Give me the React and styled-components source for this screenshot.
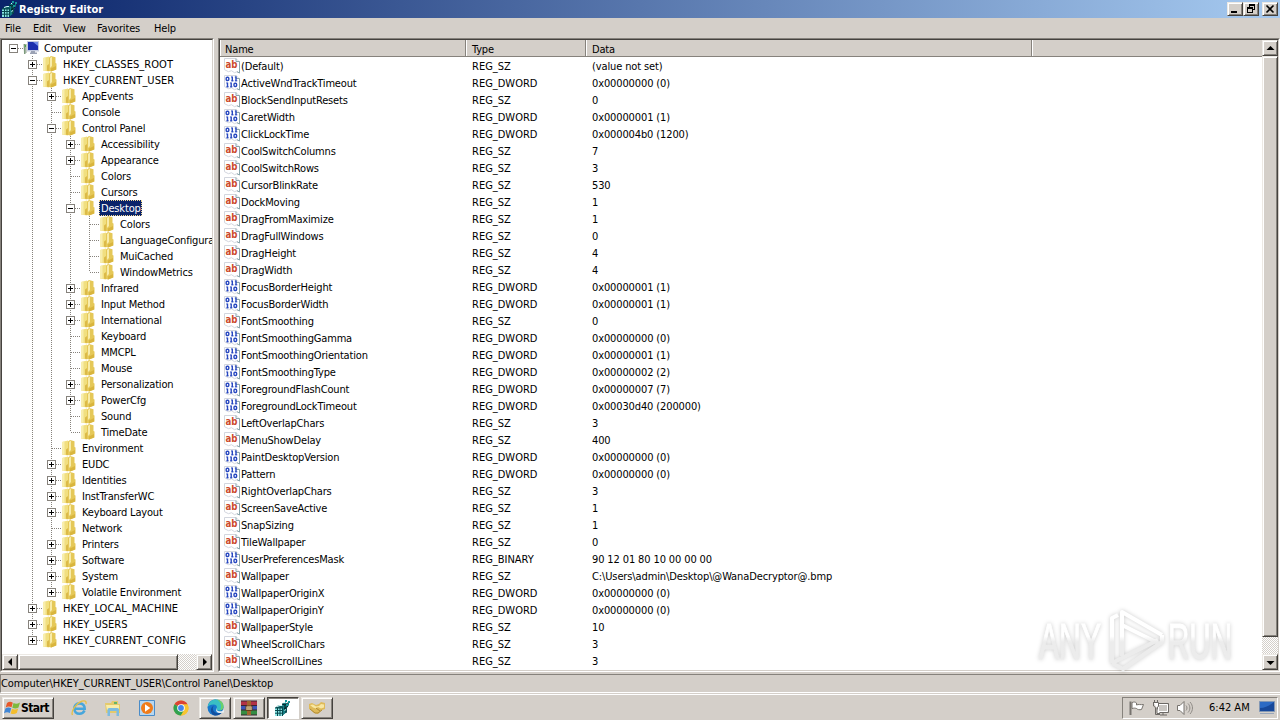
import React from "react";
import styled, { createGlobalStyle, css } from "styled-components";

const GlobalStyle = createGlobalStyle`
    * {
        box-sizing: border-box;
    }
    body {
        margin: 0;
        overflow: hidden;
        background: #d4cfc9;
    }
`
const checker = css`
    background: repeating-conic-gradient(#ffffff 0 25%, #d4cfc9 0 50%) 0 0 / 2px 2px;
`
const raised = css`
    background: #d4cfc9;
    border: 1px solid;
    border-color: #ece9e4 #45423e #45423e #ece9e4;
    box-shadow: inset 1px 1px 0 #ffffff, inset -1px -1px 0 #86827c;
`
const Screen = styled.div`
    width: 1280px;
    height: 720px;
    display: flex;
    flex-direction: column;
    background: #d4cfc9;
    color: #000000;
    font-family: "DejaVu Sans Condensed", "DejaVu Sans", sans-serif;
    font-stretch: condensed;
    font-size: 11px;
    letter-spacing: -0.17px;
    line-height: 16px;
    white-space: nowrap;
    cursor: default;
    overflow: hidden;
`
const TitleBar = styled.div`
    height: 18px;
    flex: none;
    display: flex;
    align-items: center;
    padding: 0 2px 0 2px;
    background: linear-gradient(to right, #0a246a, #a6caf0);
    color: #ffffff;
`
const Title = styled.span`
    flex: 1;
    padding: 1px 0 0 1px;
    font-weight: bold;
    letter-spacing: 0.02px;
`
const CaptionButton = styled.div`
    width: 16px;
    height: 14px;
    margin-left: ${props => props.$gap ? "3px" : "0"};
    display: flex;
    align-items: center;
    justify-content: center;
    ${raised}
`
const MenuBar = styled.div`
    height: 20px;
    flex: none;
    display: flex;
    align-items: center;
    gap: 12px;
    padding: 1px 0 0 5px;
`
const MenuItem = styled.span`
    width: ${props => props.$width}px;
`
const Workspace = styled.div`
    height: 634px;
    flex: none;
    display: flex;
    gap: 4px;
`
const Pane = styled.div`
    border: 1px solid;
    border-color: #86827c #ffffff #ffffff #86827c;
    width: ${props => props.$width}px;
    flex: none;
`
const PaneInner = styled.div`
    height: 100%;
    border: 1px solid;
    border-color: #45423e #d4cfc9 #d4cfc9 #45423e;
    background: #ffffff;
    display: flex;
    flex-direction: ${props => props.$row ? "row" : "column"};
    overflow: hidden;
`
const Tree = styled.div`
    flex: 1;
    overflow: hidden;
    padding-left: 2px;
`
const TreeRow = styled.div`
    height: 16px;
    display: flex;
    align-items: center;
`
const dotsDown = "repeating-linear-gradient(to bottom, #86827c 0 1px, transparent 1px 2px)";
const dotsRight = "repeating-linear-gradient(to right, #86827c 0 1px, transparent 1px 2px)";
const Guide = styled.div`
    width: 19px;
    height: 16px;
    flex: none;
    display: flex;
    align-items: center;
    padding-left: 5px;
    background-repeat: no-repeat;
    background-image: ${props => props.$down ? dotsDown : "none"}, ${props => props.$across ? dotsRight : "none"};
    background-size: 1px ${props => props.$half ? "8px" : "16px"}, 10px 1px;
    background-position: 9px 0, 10px 8px;
`
const Expander = styled.div`
    width: 9px;
    height: 9px;
    border: 1px solid #86827c;
    background:
        linear-gradient(#000000, #000000) 1px 3px / 5px 1px no-repeat,
        ${props => props.$open ? "" : "linear-gradient(#000000, #000000) 3px 1px / 1px 5px no-repeat,"}
        #ffffff;
`
const TreeIcon = styled.svg`
    width: 16px;
    height: 16px;
    flex: none;
`
const TreeLabel = styled.span`
    height: 16px;
    margin-left: 3px;
    padding: 1px 0 0 1px;
    border: 1px solid transparent;
    line-height: 14px;
    letter-spacing: ${props => props.$root ? "0.05px" : "-0.17px"};
    ${props => props.$selected && css`
        background: #0a246a;
        color: #ffffff;
        border: 1px dotted #f5db95;
    `}
`
const HScroll = styled.div`
    height: 16px;
    flex: none;
    display: flex;
    ${checker}
`
const VScroll = styled.div`
    width: 16px;
    flex: none;
    display: flex;
    flex-direction: column;
    ${checker}
`
const ScrollButton = styled.div`
    width: 16px;
    height: 16px;
    flex: none;
    display: flex;
    align-items: center;
    justify-content: center;
    ${raised}
`
const HThumb = styled.div`
    width: 160px;
    ${raised}
`
const VThumb = styled.div`
    height: 581px;
    ${raised}
`
const ScrollSpace = styled.div`
    flex: 1;
`
const List = styled.div`
    flex: 1;
    overflow: hidden;
`
const ListHeader = styled.div`
    height: 17px;
    display: flex;
    margin-bottom: 1px;
`
const HeaderCell = styled.div`
    width: ${props => props.$width ? props.$width + "px" : "auto"};
    flex: ${props => props.$width ? "none" : 1};
    padding: 1px 0 0 ${props => props.$first ? "5px" : "6px"};
    line-height: 17px;
    letter-spacing: -0.17px;
    background: #d4cfc9;
    border-bottom: 1px solid #86827c;
    border-right: ${props => props.$width ? "1px solid #86827c" : "none"};
    box-shadow: inset 1px 0 0 #ffffff;
`
const ListRow = styled.div`
    height: 17px;
    display: grid;
    grid-template-columns: 252px 120px 1fr;
    align-items: center;
    line-height: 17px;
`
const NameCell = styled.div`
    height: 17px;
    display: flex;
    gap: 1px;
    padding-left: 4px;
`
const TypeCell = styled.span`
    letter-spacing: 0;
`
const DataCell = styled.span`
    letter-spacing: -0.12px;
`
const StatusBar = styled.div`
    height: 19px;
    flex: none;
    margin-top: 2px;
    line-height: 17px;
    letter-spacing: -0.08px;
    border-top: 1px solid #86827c;
    border-left: 1px solid #86827c;
    border-bottom: 1px solid #ffffff;
`
const TaskBar = styled.div`
    flex: 1;
    display: flex;
    align-items: center;
    border-top: 1px solid #ffffff;
    margin-top: 1px;
    padding: 0 2px;
`
const StartButton = styled.div`
    width: 52px;
    height: 22px;
    display: flex;
    align-items: center;
    padding-left: 1px;
    ${raised}
`
const StartText = styled.span`
    font-weight: bold;
    font-size: 12px;
    letter-spacing: -0.6px;
`
const QuickLaunch = styled.div`
    display: flex;
    gap: 18px;
    padding: 0 10px 0 17px;
    svg {
        display: block;
    }
`
const TaskButtons = styled.div`
    display: flex;
    gap: 2px;
    flex: 1;
`
const TaskButton = styled.div`
    width: 32px;
    height: 22px;
    display: flex;
    align-items: center;
    justify-content: center;
    ${raised}
    ${props => props.$active && css`
        background: #ffffff;
        border-color: #45423e #ffffff #ffffff #45423e;
        box-shadow: inset 1px 1px 0 #86827c;
    `}
`
const Tray = styled.div`
    width: 156px;
    height: 22px;
    display: flex;
    align-items: center;
    gap: 6px;
    border: 1px solid;
    border-color: #86827c #ffffff #ffffff #86827c;
    padding-left: 5px;
`
const Clock = styled.span`
    width: 44px;
    margin-left: 9px;
    letter-spacing: 0;
`
const Watermark = styled.svg`
    position: absolute;
    left: 1030px;
    top: 600px;
    filter: drop-shadow(0 0 2px rgba(0, 0, 0, 0.2));
`

const FolderIcon = () => (
    <TreeIcon viewBox="0 0 16 16">
        <path d="M1 2 7 .5v15L1 14.500z" fill="#f1df80" />
        <path d="M1 2 3.500 1.500V14.500L1 14.200z" fill="#f8eeae" />
        <path d="M7 1.500 9 0l4.500 1.200V7l1 .5v6L9 15.500l-2-.5z" fill="#e5c858" />
        <path d="M8 2 10 .5v9.500l-2 2z" fill="#f8ecab" />
        <path d="M9 12.500 14 10v3.400L9 15.500z" fill="#d9b53e" />
        <path d="M5 9.500 7 8v7l-2-.2z" fill="#dcba48" />
    </TreeIcon>
)
const ComputerIcon = () => (
    <TreeIcon viewBox="0 0 16 16">
        <path d="M0 4h4v9H1z" fill="#c6ccc4" />
        <path d="M1 4h1.500v10H1z" fill="#7c9a7c" />
        <path d="M2 5h1v2H2z" fill="#4aa848" />
        <path d="M4 1h12v10.500H4z" fill="#c4cbe0" />
        <path d="M5 2h10v8H5z" fill="#1b2fae" />
        <path d="M10 2h5v4z" fill="#6f8be6" />
        <path d="M8 11h4v1.500h2V14H7v-1.500h1z" fill="#9ba2b4" />
    </TreeIcon>
)
const ValueIcon = ({ type }) => (
    <svg width="16" height="16" viewBox="0 0 16 16">
        <path d="M.5.5h11.5l3.500 3.500v11l-2.500-1.300-2.500 1-3-2-3 1-4-2z" fill="#ffffff" stroke="#d3d6de" />
        <path d="M12 .5v3h3.500v11.500l-2.500-1.300" fill="none" stroke="#8ba6ac" />
        {type === "REG_SZ"
            ? <text x="1.500" y="10" fontFamily="DejaVu Sans" fontWeight="bold" fontSize="10.500" letterSpacing="0" textLength="12" lengthAdjust="spacingAndGlyphs" fill="#cc4a2c">ab</text>
            : <g fill="none" stroke="#2848c0" strokeWidth="1.400">
                <rect x="2.200" y="2.200" width="2.600" height="3.300" rx="1" />
                <path d="M8.300 1.500v4.700M12 1.500v4.700" />
                <path d="M7 2h1M10.800 2h1M7.200 5.800h2.400M10.900 5.800h2.400" strokeWidth="0.900" />
                <path d="M3.500 7.500v4.700M7.200 7.500v4.700" />
                <path d="M2.200 8h1M5.900 8h1M2.300 11.800h2.400M6 11.800h2.400" strokeWidth="0.900" />
                <rect x="10" y="8.200" width="2.600" height="3.300" rx="1" />
            </g>}
    </svg>
)
const RegeditIcon = () => (
    <svg width="16" height="16" viewBox="0 0 16 16">
        <path d="M0 8 3 5.500h7V13l-3 3H0z" fill="#0b5c62" />
        <path d="M0 8h7v8H0z" fill="#8ae6e6" />
        <path d="M0 10.500h7M0 13.200h7M2.500 8v8M5 8v8M7.500 7v9M0 8h7" stroke="#08484d" fill="none" />
        <path d="m7 4 3-2 2 2 2-2v3l-2 3v4l-4 3V8z" fill="#127c80" />
        <path d="m7 4 3 1v4M10 5l4-3M9 9l4-3M11 8v5" stroke="#021f25" fill="none" />
        <path d="m2 6.500 3-1h2M9 3l1-1M9.500 10.500l1.500-1" stroke="#cffafa" fill="none" />
        <path d="M10 0h2v2h-2zM13 1h2v2h-2zM11 4h2v2h-2z" fill="#17969a" />
    </svg>
)
const WindowsFlag = () => (
    <svg width="17" height="16" viewBox="0 0 17 16">
        <path d="M3 3c2-1.500 4-1.400 5.800-.3L7.500 7.300C5.600 6.300 3.700 6.300 1.700 7.500z" fill="#e8582a" />
        <path d="M9.500 3.100c2 1 4 .9 6.500-.5l-1.500 4.800c-2 1.300-4 1.300-6.200.3z" fill="#7eb93c" />
        <path d="M1.400 8.400c2-1.200 3.900-1.200 5.800-.2L5.900 13C4 12 2 12 0 13.200z" fill="#3f86d6" />
        <path d="M8 8.700c2.200 1 4.200.9 6.200-.3l-1.400 4.700c-2 1.300-4.100 1.300-6.200.3z" fill="#f3bd2e" />
    </svg>
)
const IeIcon = () => (
    <svg width="16" height="16" viewBox="0 0 16 16">
        <path d="M13.500 10.500c-1 2.200-2.800 3.300-5 3.300-3.200 0-5.200-2.200-5.200-5.200s2-5.200 5.200-5.200 5.300 2.200 5.200 5.300H4" fill="none" stroke="#46a6dc" strokeWidth="2.600" />
        <path d="M1.500 15C-.5 11.500 5 3.500 11 1.200c3.200-1 4.700.2 3.900 2.800" fill="none" stroke="#e6bf45" strokeWidth="1.300" />
    </svg>
)
const ExplorerIcon = () => (
    <svg width="16" height="16" viewBox="0 0 16 16">
        <path d="M0 3h6l1-2h6v3h2v9H1z" fill="#e4ca6c" />
        <path d="M1 5h13v5H2z" fill="#f8edaa" />
        <path d="M9 2h3v2H9z" fill="#65b567" />
        <path d="M2.500 16V9.500C2.500 8 4 8 5 8h6.500c1 0 2.500 0 2.500 1.500V16h-2.500v-5H5v5z" fill="#7dbce0" />
    </svg>
)
const PlayerIcon = () => (
    <svg width="16" height="16" viewBox="0 0 16 16">
        <path d="M.5.5h15v15H.5z" fill="#b7d7f0" stroke="#4a8cc8" />
        <circle cx="8" cy="8" r="6" fill="#f07c1a" />
        <path d="m6 4.300 5.300 3.700L6 11.700z" fill="#ffffff" />
    </svg>
)
const ChromeIcon = () => (
    <svg width="16" height="16" viewBox="0 0 16 16">
        <circle cx="8" cy="8" r="7.500" fill="#f7c531" />
        <path d="M8 8 1.500 4.250A7.500 7.500 0 0 1 14.500 4.250z" fill="#db4334" />
        <path d="M8 8 1.500 4.250A7.500 7.500 0 0 0 8 15.500l3.200-5.600z" fill="#2fa150" />
        <path d="M8 4.250h6.500A7.500 7.500 0 0 1 8 15.500l3.200-5.600z" fill="#f7c531" />
        <circle cx="8" cy="8" r="3.800" fill="#ffffff" />
        <circle cx="8" cy="8" r="2.900" fill="#4284ec" />
    </svg>
)
const EdgeIcon = () => (
    <svg width="17" height="17" viewBox="0 0 17 17">
        <circle cx="8.500" cy="8.500" r="8" fill="#1877cc" />
        <path d="M.7 8C1.500 3 5 .5 8.700.5c4.300 0 7.800 3 7.800 6.700 0 3-2.200 4.300-4.500 4.300-2 0-2.700-1-2.200-2C10.500 7 9 5.600 6.500 5.600 3.500 5.600 1.500 6.600.7 8z" fill="#39bfc4" />
        <path d="M10 .6c3.800.6 6.500 3.300 6.500 6.600 0 2.500-1.500 3.800-3.300 4.200C15 8 14 3 10 .6z" fill="#6ad06a" />
        <path d="M7 6.500c-2.500 2.500-1 7.500 4 7.800 2 0 3.300-.5 4.500-1.700-1.600 3-5 4.300-8 3.800C3 15 2.500 8.500 7 6.500z" fill="#124f9e" />
        <path d="M9.700 8.800c-.8 2.500.8 4 4.800 3.400l2.500-1.700v3l-3 .6c-4 .2-6-2.300-4.300-5.300z" fill="#e6eef2" />
    </svg>
)
const WinRarIcon = () => (
    <svg width="18" height="16" viewBox="0 0 18 16">
        <path d="M1 1h16v4.500H1z" fill="#b23246" />
        <path d="M1 5.500h16v4.500H1z" fill="#3a55b8" />
        <path d="M1 10h16v5H1z" fill="#358c42" />
        <path d="M1 5.500h16M1 10h16M1 1h16M1 15h16" stroke="#3c2430" />
        <path d="M7 1h4v14H7z" fill="#a0662e" />
        <path d="M6 6h6v4.500H6z" fill="#f2e6c4" stroke="#66401c" />
        <path d="M8 7v3M10 7v3" stroke="#8a6428" />
    </svg>
)
const HandshakeIcon = () => (
    <svg width="18" height="16" viewBox="0 0 18 16">
        <path d="m1 4 3-1 4 2 3-1 2-2 4 1v6l-3 1-4 4-4-1-3-3-2-1z" fill="#dfba58" />
        <path d="m2 5 3-.5 3 2 3-.5 2-2 3 .5v3l-3 1-3-1.500-2 1.500-3-1z" fill="#f8e7a2" />
        <path d="m2 9 5 4h3l4-3M8 8l4 3" stroke="#b08a34" fill="none" />
    </svg>
)
const FlagIcon = () => (
    <svg width="18" height="16" viewBox="0 0 18 16">
        <path d="M2.500 15V1.500" stroke="#77736e" strokeWidth="2" />
        <path d="M4 2.500c2-.8 3.500-.5 4.500.5v2c2-1 4 0 7-.5l-2 5c-2 .5-4 .2-5-1C7 8 6 8 4 8.500z" fill="#ffffff" stroke="#77736e" />
    </svg>
)
const NetworkIcon = () => (
    <svg width="18" height="16" viewBox="0 0 18 16">
        <path d="M5.500 3.500h11v9h-11z" fill="#c9c6c2" stroke="#6c6965" />
        <path d="M6.500 4.500h9v7h-9z" fill="none" stroke="#ffffff" />
        <path d="M8 15h7M11 12.500V15" stroke="#6c6965" />
        <path d="M1.500 2.500h5v4l-1.500 1v6h3" fill="#ffffff" stroke="#6c6965" />
        <path d="M1.500 2v4l2 1.500v7H8M2.500 0v3M5.500 0v3" fill="none" stroke="#6c6965" />
    </svg>
)
const SoundIcon = () => (
    <svg width="18" height="16" viewBox="0 0 18 16">
        <path d="M1.500 5.500h2.500l4-4v13l-4-4H1.500z" fill="#ffffff" stroke="#77736e" />
        <path d="M10 5.500c1.300 1.500 1.300 3.500 0 5M12 3.500c2.500 2.500 2.500 6.500 0 9M14 2c3.300 3.500 3.300 8.500 0 12" fill="none" stroke="#8e8a85" />
    </svg>
)
const DesktopIcon = () => (
    <svg width="16" height="15" viewBox="0 0 16 15">
        <path d="M.5 1.500h15v10H.5z" fill="#2c6ac4" stroke="#8297b4" />
        <path d="M1 8c5 0 9-2 14-6v9H1z" fill="#17489a" />
        <path d="M1 13.500h14" stroke="#98a6ba" />
    </svg>
)
const arrows = {
    left: "M6 0v8L2 4z",
    right: "M3 0v8l4-4z",
    up: "M.5 6h8l-4-4z",
    down: "M.5 3h8l-4 4z"
}
const Arrow = ({ to }) => (
    <svg width="9" height="9" viewBox="0 0 9 9"><path d={arrows[to]} /></svg>
)

// [depth, name, expander]
const keys = [
    [0, "Computer", "-"],
    [1, "HKEY_CLASSES_ROOT", "+"],
    [1, "HKEY_CURRENT_USER", "-"],
    [2, "AppEvents", "+"],
    [2, "Console"],
    [2, "Control Panel", "-"],
    [3, "Accessibility", "+"],
    [3, "Appearance", "+"],
    [3, "Colors"],
    [3, "Cursors"],
    [3, "Desktop", "-"],
    [4, "Colors"],
    [4, "LanguageConfiguration"],
    [4, "MuiCached"],
    [4, "WindowMetrics"],
    [3, "Infrared", "+"],
    [3, "Input Method", "+"],
    [3, "International", "+"],
    [3, "Keyboard"],
    [3, "MMCPL"],
    [3, "Mouse"],
    [3, "Personalization", "+"],
    [3, "PowerCfg", "+"],
    [3, "Sound"],
    [3, "TimeDate"],
    [2, "Environment"],
    [2, "EUDC", "+"],
    [2, "Identities", "+"],
    [2, "InstTransferWC", "+"],
    [2, "Keyboard Layout", "+"],
    [2, "Network"],
    [2, "Printers", "+"],
    [2, "Software", "+"],
    [2, "System", "+"],
    [2, "Volatile Environment", "+"],
    [1, "HKEY_LOCAL_MACHINE", "+"],
    [1, "HKEY_USERS", "+"],
    [1, "HKEY_CURRENT_CONFIG", "+"]
]
const SZ = "REG_SZ"
const DWORD = "REG_DWORD"
const values = [
    ["(Default)", SZ, "(value not set)"],
    ["ActiveWndTrackTimeout", DWORD, "0x00000000 (0)"],
    ["BlockSendInputResets", SZ, "0"],
    ["CaretWidth", DWORD, "0x00000001 (1)"],
    ["ClickLockTime", DWORD, "0x000004b0 (1200)"],
    ["CoolSwitchColumns", SZ, "7"],
    ["CoolSwitchRows", SZ, "3"],
    ["CursorBlinkRate", SZ, "530"],
    ["DockMoving", SZ, "1"],
    ["DragFromMaximize", SZ, "1"],
    ["DragFullWindows", SZ, "0"],
    ["DragHeight", SZ, "4"],
    ["DragWidth", SZ, "4"],
    ["FocusBorderHeight", DWORD, "0x00000001 (1)"],
    ["FocusBorderWidth", DWORD, "0x00000001 (1)"],
    ["FontSmoothing", SZ, "0"],
    ["FontSmoothingGamma", DWORD, "0x00000000 (0)"],
    ["FontSmoothingOrientation", DWORD, "0x00000001 (1)"],
    ["FontSmoothingType", DWORD, "0x00000002 (2)"],
    ["ForegroundFlashCount", DWORD, "0x00000007 (7)"],
    ["ForegroundLockTimeout", DWORD, "0x00030d40 (200000)"],
    ["LeftOverlapChars", SZ, "3"],
    ["MenuShowDelay", SZ, "400"],
    ["PaintDesktopVersion", DWORD, "0x00000000 (0)"],
    ["Pattern", DWORD, "0x00000000 (0)"],
    ["RightOverlapChars", SZ, "3"],
    ["ScreenSaveActive", SZ, "1"],
    ["SnapSizing", SZ, "1"],
    ["TileWallpaper", SZ, "0"],
    ["UserPreferencesMask", "REG_BINARY", "90 12 01 80 10 00 00 00"],
    ["Wallpaper", SZ, "C:\\Users\\admin\\Desktop\\@WanaDecryptor@.bmp"],
    ["WallpaperOriginX", DWORD, "0x00000000 (0)"],
    ["WallpaperOriginY", DWORD, "0x00000000 (0)"],
    ["WallpaperStyle", SZ, "10"],
    ["WheelScrollChars", SZ, "3"],
    ["WheelScrollLines", SZ, "3"]
]

// true when the branch at this level goes on below the row
const continues = (index, level) => {
    for (let i = index + 1; i < keys.length; i++) {
        if (keys[i][0] < level) return false
        if (keys[i][0] === level) return true
    }
    return false
}

const KeyRow = ({ index }) => {
    const [depth, name, expander] = keys[index]
    const parents = []
    for (let level = 0; level < depth; level++) {
        parents.push(<Guide key={level} $down={level > 0 && continues(index, level)} />)
    }
    return (
        <TreeRow>
            {parents}
            <Guide $down={depth > 0} $half={!continues(index, depth)} $across>
                {expander && <Expander $open={expander === "-"} />}
            </Guide>
            {depth === 0 ? <ComputerIcon /> : <FolderIcon />}
            <TreeLabel $root={depth === 1} $selected={name === "Desktop"}>{name}</TreeLabel>
        </TreeRow>
    )
}

export default function App() {
    return (
        <Screen>
            <GlobalStyle />
            <TitleBar>
                <RegeditIcon />
                <Title>Registry Editor</Title>
                <CaptionButton>
                    <svg width="10" height="10"><path d="M1 7h6v2H1z" /></svg>
                </CaptionButton>
                <CaptionButton>
                    <svg width="10" height="10" viewBox="0 0 10 10">
                        <path d="M3 0h6v2H3zM8 2h1v4H7V5h1zM3 2h1v1H3zM1 3h6v2H1zM1 5h1v4H1zM6 5h1v4H6zM2 8h4v1H2z" />
                    </svg>
                </CaptionButton>
                <CaptionButton $gap>
                    <svg width="10" height="10"><path d="m1.500 1.500 7 7M8.500 1.500l-7 7" stroke="#000000" strokeWidth="1.600" /></svg>
                </CaptionButton>
            </TitleBar>
            <MenuBar>
                <MenuItem $width={16}>File</MenuItem>
                <MenuItem $width={18}>Edit</MenuItem>
                <MenuItem $width={22}>View</MenuItem>
                <MenuItem $width={45}>Favorites</MenuItem>
                <MenuItem $width={22}>Help</MenuItem>
            </MenuBar>
            <Workspace>
                <Pane $width={214}>
                    <PaneInner>
                        <Tree>
                            {keys.map((key, index) => <KeyRow key={index} index={index} />)}
                        </Tree>
                        <HScroll>
                            <ScrollButton><Arrow to="left" /></ScrollButton>
                            <HThumb />
                            <ScrollSpace />
                            <ScrollButton><Arrow to="right" /></ScrollButton>
                        </HScroll>
                    </PaneInner>
                </Pane>
                <Pane $width={1062}>
                    <PaneInner $row>
                        <List>
                            <ListHeader>
                                <HeaderCell $width={246} $first>Name</HeaderCell>
                                <HeaderCell $width={120}>Type</HeaderCell>
                                <HeaderCell $width={446}>Data</HeaderCell>
                                <HeaderCell />
                            </ListHeader>
                            {values.map(([name, type, data]) => (
                                <ListRow key={name}>
                                    <NameCell><ValueIcon type={type} />{name}</NameCell>
                                    <TypeCell>{type}</TypeCell>
                                    <DataCell>{data}</DataCell>
                                </ListRow>
                            ))}
                        </List>
                        <VScroll>
                            <ScrollButton><Arrow to="up" /></ScrollButton>
                            <VThumb />
                            <ScrollSpace />
                            <ScrollButton><Arrow to="down" /></ScrollButton>
                        </VScroll>
                    </PaneInner>
                </Pane>
            </Workspace>
            <StatusBar>Computer\HKEY_CURRENT_USER\Control Panel\Desktop</StatusBar>
            <TaskBar>
                <StartButton>
                    <WindowsFlag />
                    <StartText>Start</StartText>
                </StartButton>
                <QuickLaunch>
                    <IeIcon />
                    <ExplorerIcon />
                    <PlayerIcon />
                    <ChromeIcon />
                </QuickLaunch>
                <TaskButtons>
                    <TaskButton><EdgeIcon /></TaskButton>
                    <TaskButton><WinRarIcon /></TaskButton>
                    <TaskButton $active><RegeditIcon /></TaskButton>
                    <TaskButton><HandshakeIcon /></TaskButton>
                </TaskButtons>
                <Tray>
                    <FlagIcon />
                    <NetworkIcon />
                    <SoundIcon />
                    <Clock>6:42 AM</Clock>
                    <DesktopIcon />
                </Tray>
            </TaskBar>
            <Watermark width="210" height="76" viewBox="0 0 210 76">
                <defs>
                    <linearGradient id="fade" gradientUnits="userSpaceOnUse" x1="0" y1="10" x2="0" y2="68">
                        <stop offset="0.45" stopColor="#ffffff" />
                        <stop offset="0.55" stopColor="#ececec" />
                    </linearGradient>
                </defs>
                <g fill="url(#fade)" fontFamily="Liberation Sans Narrow, Liberation Sans" fontSize="50" letterSpacing="0" stroke="url(#fade)">
                    <text x="9" y="59" textLength="62" lengthAdjust="spacingAndGlyphs">ANY</text>
                    <text x="138" y="59" textLength="64" lengthAdjust="spacingAndGlyphs">RUN</text>
                </g>
                <g fill="none" stroke="url(#fade)" strokeWidth="4" strokeLinejoin="round">
                    <path d="M82 63V18l6-3M92 56V12l40 23M92 25l36 18M82 63l11 6 39-27v-7M84 62l44-22" />
                </g>
            </Watermark>
        </Screen>
    )
}
